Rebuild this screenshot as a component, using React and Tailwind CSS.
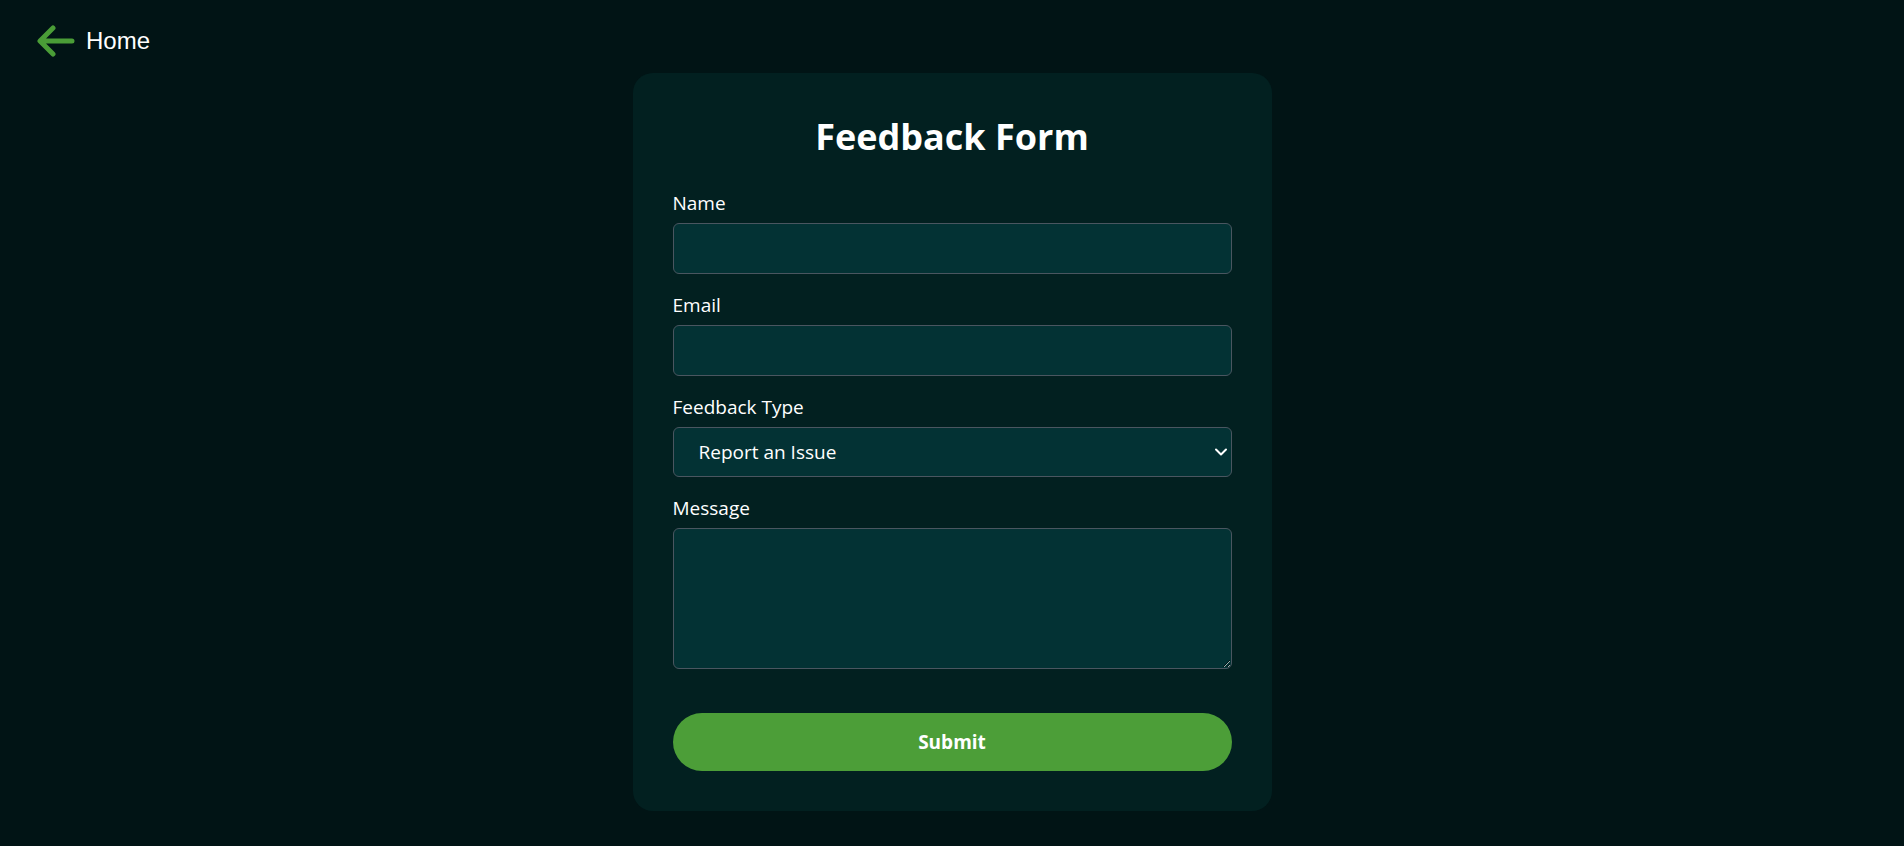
import React from "react";

function Field({ label, children, className = "" }) {
  return (
    <div className={"mb-[18px] " + className}>
      <label className="block text-[19px] leading-[27px] mb-[6px] text-white">{label}</label>
      {children}
    </div>
  );
}

export default function App() {
  const inputCls =
    "block w-full h-[51px] rounded-md border border-[#4a5660] bg-[#033234] px-3 text-[19px] text-white outline-none";
  return (
    <div
      className="min-h-screen bg-[#011415] pt-[22px] pb-[35px] text-white"
      style={{ fontFamily: '"Open Sans", "Noto Sans", sans-serif' }}
    >
      <div className="flex items-center h-[38px] pl-[37px]">
        <a href="#" className="flex items-center gap-[11px] text-white no-underline">
          <svg width="38" height="34" viewBox="0 0 38 34" fill="none">
            <path
              d="M35 17 H4 M16 4 L3 17 L16 30"
              stroke="#4a9d37"
              strokeWidth="5"
              strokeLinecap="round"
              strokeLinejoin="round"
            />
          </svg>
          <span className="text-[24px] leading-none" style={{ fontFamily: '"Liberation Sans", Arial, sans-serif' }}>
            Home
          </span>
        </a>
      </div>

      <div className="mx-auto mt-[13px] w-[639px] rounded-[20px] bg-[#022020] p-10">
        <h1 className="text-center text-[36px] font-bold leading-[48px] mb-[29px]">Feedback Form</h1>
        <form onSubmit={(e) => e.preventDefault()}>
          <Field label="Name">
            <input type="text" className={inputCls} />
          </Field>
          <Field label="Email">
            <input type="email" className={inputCls} />
          </Field>
          <Field label="Feedback Type">
            <div className="relative">
              <select
                className="block w-full h-[50px] appearance-none rounded-md border border-[#4a5660] bg-[#033234] pl-[25px] pr-8 text-[19px] text-white outline-none"
                defaultValue="issue"
              >
                <option value="issue">Report an Issue</option>
                <option value="suggestion">Suggestion</option>
                <option value="other">Other</option>
              </select>
              <svg
                className="pointer-events-none absolute right-[4px] top-1/2 -translate-y-1/2"
                width="14"
                height="10"
                viewBox="0 0 14 10"
                fill="none"
              >
                <path d="M2 2.5 L7 7.5 L12 2.5" stroke="white" strokeWidth="2" strokeLinecap="round" strokeLinejoin="round" />
              </svg>
            </div>
          </Field>
          <div>
            <label className="block text-[19px] leading-[27px] mb-[6px] text-white">Message</label>
            <textarea className="block w-full h-[141px] rounded-md border border-[#4a5660] bg-[#033234] px-3 py-2 text-[19px] text-white outline-none resize-y" />
          </div>
          <button
            type="submit"
            className="mt-[44px] block w-full h-[58px] rounded-full bg-[#4c9e38] text-[19px] font-bold text-white"
          >
            Submit
          </button>
        </form>
      </div>
    </div>
  );
}
